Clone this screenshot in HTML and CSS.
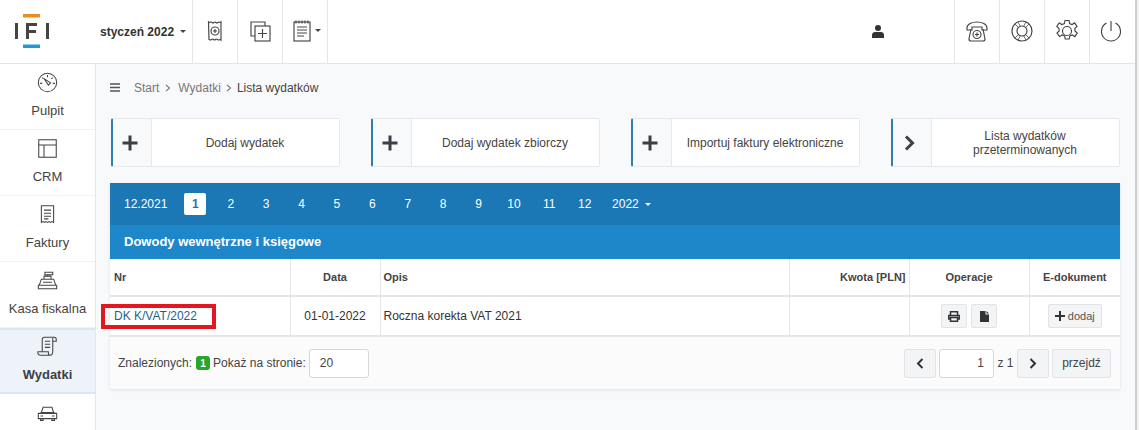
FILE: index.html
```html
<!DOCTYPE html>
<html lang="pl">
<head>
<meta charset="utf-8">
<title>Lista wydatków</title>
<link rel="stylesheet" href="styles.css">
</head>
<body>
<div class="app">
  <header class="top">
    <div class="logo">
      <svg width="36" height="36" viewBox="0 0 36 36"><rect x="9" y="0" width="17" height="3.5" fill="#f08a24"/><rect x="9" y="30.500" width="17" height="3.500" fill="#1f9ad6"/><rect x="1" y="9" width="3" height="16" fill="#444"/><path d="M12 9h11v3h-8v4h7v3h-7v6h-3z" fill="#444"/><rect x="32" y="9" width="3" height="16" fill="#444"/></svg>
    </div>
    <div class="month">styczeń 2022<span class="caret"></span></div>
    <div class="tool first"><svg class="i" viewBox="0 0 24 24"><path d="M5.500 3c1 1 1.500 0 2.500 0s1 1 2 1 1-1 2-1 1 1 2 1 1-1 2-1 1 1 2 0v18c-1-1-1.500 0-2.500 0s-1-1-2-1-1 1-2 1-1-1-2-1-1 1-2 1-1-1-1.500 0z"/><circle cx="12" cy="12" r="4"/><path d="M12 10v4M10 12h4"/></svg></div>
    <div class="tool"><svg class="i" viewBox="0 0 24 24"><path d="M7 17H3V3h14v4"/><rect x="7" y="7" width="15" height="15"/><path d="M14.500 10v9M10 14.500h9"/></svg></div>
    <div class="tool wide"><svg class="i" viewBox="0 0 24 24"><rect x="4" y="3" width="16" height="19"/><path d="M6 1.500v3M9 1.500v3M12 1.500v3M15 1.500v3M18 1.500v3M7 8h10M7 11h10M7 14h10M7 17h7"/></svg><span class="caret"></span></div>
    <div class="user"><svg width="12" height="13" viewBox="0 0 12 13"><circle cx="6" cy="3" r="3" fill="#333"/><path d="M0 13v-3c0-2 1.500-3 3-3h6c1.500 0 3 1 3 3v3z" fill="#333"/></svg></div>
    <div class="tool first"><svg class="i" viewBox="0 0 24 24"><path d="M2 9c0-8 20-8 20 0v2h-5V8H7v3H2z"/><path d="M6 10 4 20c0 1 1 2 2 2h12c1 0 2-1 2-2l-2-10"/><circle cx="12" cy="15.500" r="4"/><path d="M12 13.500v4M10 15.500h4"/></svg></div>
    <div class="tool"><svg class="i" viewBox="0 0 24 24"><circle cx="12" cy="12" r="10"/><circle cx="12" cy="12" r="5"/><path d="M5 5l3.500 3.500M8 3l2.500 4.500M19 5l-3.500 3.500M16 3l-2.500 4.500M5 19l3.500-3.500M8 21l2.500-4.500M19 19l-3.500-3.500M16 21l-2.500-4.500" stroke-width=".8"/></svg></div>
    <div class="tool"><svg class="i" viewBox="0 0 24 24"><circle cx="12" cy="12" r="4.500"/><path d="M10 2h4l.6 3 2.400 1 2.600-1.600 2.400 3.600-2.200 2 .2 2.500 2.200 2-2.400 3.600-2.600-1.600-2.400 1-.6 3h-4l-.6-3-2.400-1-2.600 1.600L2 14.500l2.200-2-.2-2.500-2.200-2 2.400-3.600L7 6l2.400-1z" transform="translate(0 -.5)"/></svg></div>
    <div class="tool last"><svg class="i" viewBox="0 0 24 24"><path d="M12 2v10"/><path d="M7.500 4.100a9.500 9.500 0 1 0 9 0"/></svg></div>
  </header>
  <div class="main">
    <nav class="side">
      <a class="nav"><svg class="ni" viewBox="0 0 24 24"><circle cx="12" cy="12" r="10.500"/><path d="M8 7.500 15.500 12.500 13 15z"/><path d="M12 3.500v2.500M6 6.500l1.500 1.500M18 6.500 16.500 8M3.500 13H6M18 13h2.500"/></svg><span>Pulpit</span></a>
      <a class="nav"><svg class="ni" viewBox="0 0 24 24"><rect x="2" y="2" width="20" height="20"/><path d="M2 8h20M8 8v14"/></svg><span>CRM</span></a>
      <a class="nav"><svg class="ni" viewBox="0 0 24 24"><path d="M5 2h14v19l-2-1-1.500 1-1.700-1-1.800 1-1.800-1-1.700 1L7 20l-2 1z"/><path d="M8 7h8M8 10.500h8M8 14h8M8 17h5"/></svg><span>Faktury</span></a>
      <a class="nav"><svg class="ni" viewBox="0 0 24 24"><path d="M1.500 17.500h21v4h-21zM2.500 17.500l2.500-7h14l2.500 7M8 10.500V7h8v3.500M9 2.500h9v3H9zM12 5.500V7M7 14h10"/></svg><span>Kasa fiskalna</span></a>
      <a class="nav active"><svg class="ni" viewBox="0 0 24 24"><path d="M6 18V4c0-1.500 1-2.500 2.500-2.500H20c1.500 0 2 1 2 2.500v2h-4"/><path d="M18 2v15c0 2.500-1 5-3.500 5H4c-2 0-3-1.500-3-3l0-1h12v1c0 1.500 1 3 2 3"/><path d="M9 6h6M9 9.500h6M9 13h6"/></svg><span>Wydatki</span></a>
      <a class="nav"><svg class="ni" viewBox="0 0 24 24"><path d="M1.500 13h21v6h-21zM3 13l2-1 2-6h10l2 6 2 1M5 12h14M4 19v2h3v-2M17 19v2h3v-2M4 16h3M17 16h3"/></svg></a>
    </nav>
    <main class="content">
      <div class="crumbs">
        <svg class="burger" width="11" height="9" viewBox="0 0 11 9"><path d="M0 1h10M0 4.500h10M0 8h10" stroke="#555" stroke-width="1.500"/></svg>
        <span>Start</span><svg class="sep wide-sep" width="6" height="8" viewBox="0 0 6 8"><path d="M1 .8 4.500 4 1 7.200" fill="none" stroke="#777" stroke-width="1.100"/></svg>
        <span>Wydatki</span><svg class="sep" width="6" height="8" viewBox="0 0 6 8"><path d="M1 .8 4.500 4 1 7.200" fill="none" stroke="#777" stroke-width="1.100"/></svg>
        <span class="cur">Lista wydatków</span>
      </div>
      <div class="actions">
        <a class="act"><span class="ico"><svg width="16" height="16" viewBox="0 0 16 16"><path d="M8 .5v15M.5 8h15" stroke="#3c3f46" stroke-width="3"/></svg></span><span class="lbl">Dodaj wydatek</span></a>
        <a class="act"><span class="ico"><svg width="16" height="16" viewBox="0 0 16 16"><path d="M8 .5v15M.5 8h15" stroke="#3c3f46" stroke-width="3"/></svg></span><span class="lbl">Dodaj wydatek zbiorczy</span></a>
        <a class="act"><span class="ico"><svg width="16" height="16" viewBox="0 0 16 16"><path d="M8 .5v15M.5 8h15" stroke="#3c3f46" stroke-width="3"/></svg></span><span class="lbl">Importuj faktury elektroniczne</span></a>
        <a class="act"><span class="ico"><svg width="11" height="16" viewBox="0 0 11 16"><path d="M2 1.500 8.500 8 2 14.500" fill="none" stroke="#3c3f46" stroke-width="3"/></svg></span><span class="lbl">Lista wydatków<br>przeterminowanych</span></a>
      </div>
      <section class="panel">
        <div class="months">
          <span class="m first">12.2021</span><span class="m on">1</span><span class="m">2</span><span class="m">3</span><span class="m">4</span><span class="m">5</span><span class="m">6</span><span class="m">7</span><span class="m">8</span><span class="m">9</span><span class="m">10</span><span class="m">11</span><span class="m">12</span><span class="m yr">2022<span class="caret w"></span></span>
        </div>
        <h2 class="title">Dowody wewnętrzne i księgowe</h2>
        <table class="tbl">
          <colgroup><col class="c1"><col class="c2"><col class="c3"><col class="c4"><col class="c5"><col class="c6"></colgroup>
          <thead><tr><th class="l">Nr</th><th>Data</th><th class="l">Opis</th><th class="r">Kwota [PLN]</th><th>Operacje</th><th>E-dokument</th></tr></thead>
          <tbody><tr>
            <td class="l"><a class="doc">DK K/VAT/2022</a></td>
            <td class="ctr">01-01-2022</td>
            <td class="l">Roczna korekta VAT 2021</td>
            <td></td>
            <td class="ctr"><span class="mini"><svg width="12" height="11" viewBox="0 0 12 11"><path d="M2.500 4V.8h7V4M2.500 8H.8V4.500h10.400V8H9.500M2.500 6.500h7v3.700h-7z" fill="none" stroke="#333" stroke-width="1.500"/></svg></span><span class="mini"><svg width="9" height="11" viewBox="0 0 9 11"><path d="M0 0h5.500v3.500H9V11H0zM6.500 0 9 2.500H6.500z" fill="#333"/></svg></span></td>
            <td class="ctr"><span class="mini add"><svg width="10" height="10" viewBox="0 0 10 10"><path d="M5 0v10M0 5h10" stroke="#333" stroke-width="2"/></svg>dodaj</span></td>
          </tr></tbody>
        </table>
        <div class="foot">
          <span>Znalezionych:</span><span class="badge">1</span><span>Pokaż na stronie:</span><span class="field size">20</span>
          <span class="pager">
            <span class="pbtn"><svg width="8" height="11" viewBox="0 0 8 11"><path d="M6.500 1 2 5.500 6.500 10" fill="none" stroke="#333" stroke-width="2"/></svg></span>
            <span class="field page">1</span><span class="of">z 1</span>
            <span class="pbtn"><svg width="8" height="11" viewBox="0 0 8 11"><path d="M1.500 1 6 5.500 1.500 10" fill="none" stroke="#333" stroke-width="2"/></svg></span>
            <span class="pbtn go">przejdź</span>
          </span>
        </div>
      </section>
    </main>
  </div>
</div>
<div class="scroll"></div>
</body>
</html>
```
FILE: styles.css
```css
* { box-sizing: border-box; }
html, body { margin: 0; height: 100%; overflow: hidden; }
body { display: flex; font-family: "Liberation Sans", Arial, sans-serif; font-size: 12px; color: #333; background: #f8f9fb; }
.app { width: 1135px; height: 430px; flex: none; display: flex; flex-direction: column; }
.scroll { flex: 1; background: #f1f1f1; border-left: 2px solid #cfcfcf; }
.top { height: 64px; flex: none; display: flex; align-items: stretch; background: #fff; border-bottom: 1px solid #e4e6e9; }
.logo { width: 100px; padding: 14px 0 0 14px; }
.month { width: 92px; display: flex; align-items: center; font-weight: 700; font-size: 12px; color: #333; }
.caret { display: inline-block; width: 0; height: 0; margin-left: 6px; border-left: 3.5px solid transparent; border-right: 3.5px solid transparent; border-top: 3.5px solid #444; }
.caret.w { border-top-color: #fff; margin-left: 6px; vertical-align: 2px; }
.tool { width: 45px; display: flex; align-items: center; justify-content: center; padding-bottom: 2px; border-right: 1px solid #e4e6e9; }
.tool.first { border-left: 1px solid #e4e6e9; width: 46px; }
.tool.wide .caret { margin-left: 1px; }
.tool.last { border-right: 0; padding-right: 3px; }
.i { width: 24px; height: 24px; flex: none; fill: none; stroke: #444; stroke-width: 1.150; }
.user { flex: 1; display: flex; align-items: center; justify-content: flex-end; padding-right: 70px; }
.main { flex: 1; display: flex; min-height: 0; }
.side { width: 96px; flex: none; background: #fff; border-right: 1px solid #e4e6e9; display: flex; flex-direction: column; overflow: hidden; }
.nav { height: 66px; flex: none; display: flex; flex-direction: column; align-items: center; padding-top: 8px; gap: 10px; border-bottom: 1px solid #f0f2f4; font-size: 13px; line-height: 15px; color: #444; }
.nav.active { background: #edf3f9; border-top: 2px solid #dbe6f0; border-bottom: 2px solid #dbe6f0; font-weight: 700; color: #3a3f4a; padding-top: 6px; }
.ni { width: 21px; height: 21px; fill: none; stroke: #444; stroke-width: 1.200; flex: none; }
.content { flex: 1; min-width: 0; padding: 0 14px; }
.crumbs { height: 46px; padding-top: 1px; display: flex; align-items: center; font-size: 12px; color: #777; }
.burger { margin-right: 13px; }
.sep { margin: 0 5px; }
.sep.wide-sep { margin: 0 7px 0 6px; }
.cur { color: #444; }
.actions { display: flex; gap: 31px; margin: 8px 0 16px 1px; }
.act { width: 229px; height: 49px; display: flex; background: #fff; border: 1px solid #e6e8eb; border-left: 2px solid #2f7eb0; border-radius: 2px; }
.ico { width: 39px; flex: none; display: flex; align-items: center; justify-content: center; padding-right: 5px; background: #f8f9fb; border-right: 1px solid #e6e8eb; }
.lbl { flex: 1; display: flex; align-items: center; justify-content: center; padding-right: 1px; text-align: center; font-size: 12px; line-height: 14px; color: #444; }
.panel { width: 1010px; background: #fff; box-shadow: 0 1px 3px rgba(0,0,0,.1); }
.months { height: 42px; background: #1b78b4; display: flex; align-items: center; padding-left: 14px; color: #fff; font-size: 12px; }
.m { width: 22px; height: 22px; margin-right: 13.400px; display: flex; align-items: center; justify-content: center; }
.m.first { width: auto; margin-right: 17px; }
.m.on { background: #fff; color: #1b78b4; font-weight: 700; border-radius: 2px; }
.m.yr { width: auto; margin-left: 3px; }
.title { margin: 0; height: 34px; background: #1e87ca; color: #fff; font-size: 13px; font-weight: 700; line-height: 34px; padding-left: 14px; }
.tbl { width: 100%; table-layout: fixed; border-collapse: collapse; }
.c1 { width: 180px; } .c2 { width: 90px; } .c3 { width: 409px; } .c4 { width: 120px; } .c5 { width: 120px; } .c6 { width: 91px; }
.tbl th { height: 37px; font-size: 11px; font-weight: 700; color: #444; text-align: center; border-right: 1px solid #e4e6e9; border-bottom: 2px solid #e4e6e9; padding: 0 3px; }
.tbl td { height: 40px; font-size: 12px; color: #333; border-right: 1px solid #e4e6e9; border-bottom: 2px solid #e4e6e9; padding: 0 3px; }
.tbl th:first-child, .tbl td:first-child { padding-left: 4px; }
.tbl th:last-child, .tbl td:last-child { border-right: 0; }
.tbl .l { text-align: left; }
.tbl .r { text-align: right; }
.tbl .ctr { text-align: center; }
.doc { display: inline-block; width: 115px; height: 25px; margin-left: -13px; padding-left: 9px; border: 4px solid #e3171f; color: #1f5f8f; line-height: 16px; vertical-align: middle; }
.mini { display: inline-flex; align-items: center; justify-content: center; width: 26px; height: 24px; margin: 0 2px; background: #f3f4f5; border: 1px solid #e2e4e7; border-radius: 2px; vertical-align: middle; }
.mini.add { width: 54px; gap: 3px; font-size: 11px; color: #555; }
.foot { height: 52px; display: flex; align-items: center; padding: 0 9px 0 8px; background: #fbfbfc; font-size: 12px; color: #444; }
.badge { display: inline-flex; align-items: center; justify-content: center; width: 14px; height: 14px; margin: 0 3px 0 4px; background: #2aa52a; color: #fff; border-radius: 3px; font-size: 10px; font-weight: 700; }
.field { display: inline-flex; align-items: center; height: 29px; background: #fff; border: 1px solid #d5d8dc; border-radius: 3px; font-size: 12px; color: #444; }
.size { width: 60px; margin-left: 3px; padding-left: 10px; }
.pager { margin-left: auto; display: flex; align-items: center; }
.pbtn { display: flex; align-items: center; justify-content: center; width: 32px; height: 29px; background: #f3f4f5; border: 1px solid #e2e4e7; border-radius: 2px; }
.page { width: 55px; margin-left: 3px; justify-content: flex-end; padding-right: 9px; }
.of { width: 23px; text-align: center; }
.go { width: 59px; margin-left: 3px; font-size: 12px; }
```
